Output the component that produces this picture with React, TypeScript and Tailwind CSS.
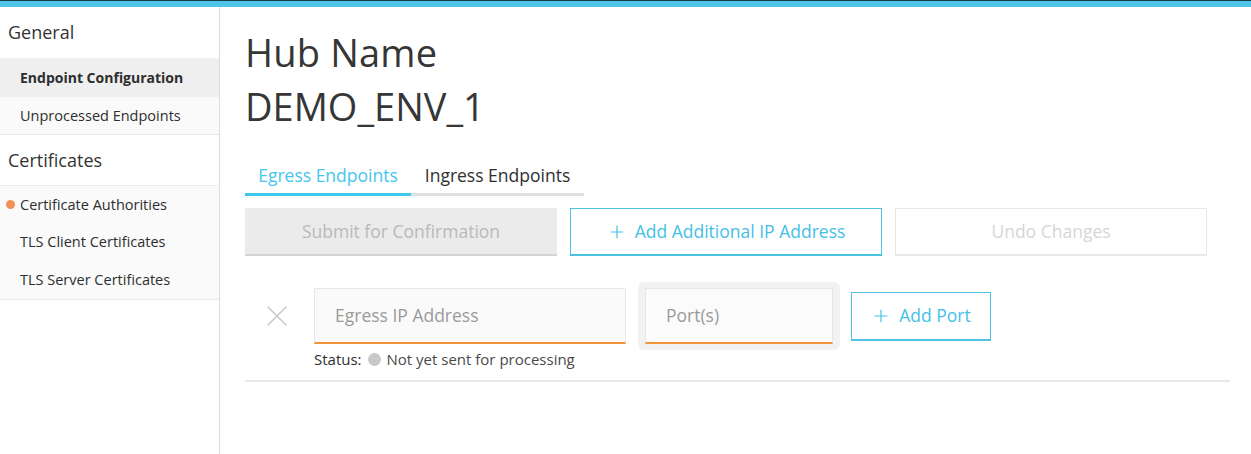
import React from 'react';
import { X, Plus } from 'lucide-react';

const font = { fontFamily: "'Open Sans', 'Noto Sans', sans-serif" };

const SideItem: React.FC<{ label: string; dot?: boolean }> = ({ label, dot }) => (
  <div className="relative flex h-[37.5px] items-center pl-5 text-[14.5px] text-[#2e2e2e]">
    {dot && <span className="absolute left-[6px] h-[9px] w-[9px] rounded-full bg-[#f4915a]" />}
    {label}
  </div>
);

export default function App() {
  return (
    <div className="flex h-[454px] w-[1251px] flex-col bg-white" style={font}>
      {/* top accent bar */}
      <div className="h-[7px] border-t border-[#1d3b4f] bg-[#4ec5e6]" />

      <div className="flex flex-1">
        {/* sidebar */}
        <aside className="w-[220px] shrink-0 border-r border-[#dcdcdc]">
          <div className="flex h-[51px] items-center pl-2 text-[18px] text-[#333]">General</div>
          <div className="border-b border-[#e8e8e8] bg-[#fafafa]">
            <div className="flex h-[39px] items-center bg-[#efefef] pl-5 text-[14px] font-bold text-[#2e2e2e]">
              Endpoint Configuration
            </div>
            <div className="flex h-[37px] items-center pl-5 text-[14.5px] text-[#2e2e2e]">Unprocessed Endpoints</div>
          </div>
          <div className="flex h-[51px] items-center border-b border-[#ececec] pl-2 text-[18px] text-[#333]">
            Certificates
          </div>
          <div className="border-b border-[#e8e8e8] bg-[#fafafa]">
            <SideItem label="Certificate Authorities" dot />
            <SideItem label="TLS Client Certificates" />
            <SideItem label="TLS Server Certificates" />
          </div>
        </aside>

        {/* main */}
        <main className="flex-1 pl-[25px] pr-[21px] text-[#333]">
          <h1 className="mt-[17px] text-[38px] leading-[56px] tracking-[0.2px] text-[#363636]">Hub Name</h1>
          <h2 className="text-[38px] leading-[52px] text-[#363636]">DEMO_ENV_1</h2>

          {/* tabs */}
          <div className="mt-[25px] flex w-[339px]">
            <div className="flex h-[39px] w-[166px] items-center justify-center border-b-[3px] border-[#3fc8ee] text-[17.5px] text-[#45c6ec]">
              Egress Endpoints
            </div>
            <div className="flex h-[39px] w-[173px] items-center justify-center border-b-[3px] border-[#e0e0e0] text-[17.5px] text-[#2f2f2f]">
              Ingress Endpoints
            </div>
          </div>

          {/* actions */}
          <div className="mt-[12px] flex gap-[13px]">
            <button className="flex h-[48px] w-[312px] items-center justify-center border-b-2 border-[#d5d5d5] bg-[#ebebeb] text-[17.5px] text-[#b9b9b9]">
              Submit for Confirmation
            </button>
            <button className="flex h-[48px] w-[312px] items-center justify-center gap-2 border border-b-2 border-[#4cc3e3] text-[17.5px] text-[#44bfe6]">
              <Plus size={20} strokeWidth={1.4} />
              Add Additional IP Address
            </button>
            <button className="flex h-[48px] w-[312px] items-center justify-center border border-b-2 border-[#e8e8e8] text-[17.5px] text-[#d6d6d6]">
              Undo Changes
            </button>
          </div>

          {/* endpoint row */}
          <div className="mt-[32px] border-b-2 border-[#e8e8e8] pb-[11px]">
            <div className="flex items-center">
              <div className="flex w-[69px] pl-[14px]">
                <X size={36} strokeWidth={0.9} className="text-[#c4c4c4]" />
              </div>
              <div className="flex h-[56px] w-[312px] items-center border border-b-2 border-[#e6e6e6] border-b-[#f0953a] bg-[#fafafa] pl-[20px] text-[17.5px] text-[#9a9a9a]">
                Egress IP Address
              </div>
              <div className="-my-[6px] ml-[12px] rounded-[6px] bg-[#f2f2f2] px-[7px] py-[6px]">
                <div className="flex h-[56px] w-[188px] items-center border border-b-2 border-[#e6e6e6] border-b-[#f0953a] bg-[#fbfbfb] pl-[20px] text-[17.5px] text-[#9a9a9a]">
                  Port(s)
                </div>
              </div>
              <button className="ml-[11px] flex h-[49px] w-[140px] items-center justify-center gap-2 border border-b-2 border-[#4cc3e3] text-[17.5px] text-[#44bfe6]">
                <Plus size={20} strokeWidth={1.4} />
                Add Port
              </button>
            </div>
            <div className="mt-[5px] flex h-[20px] items-center pl-[69px] text-[15px]">
              <span className="text-[#2e2e2e]">Status:</span>
              <span className="ml-[6px] mr-[6px] h-[13px] w-[13px] rounded-full bg-[#c8c8c8]" />
              <span className="text-[#4a4a4a]">Not yet sent for processing</span>
            </div>
          </div>
        </main>
      </div>
    </div>
  );
}
